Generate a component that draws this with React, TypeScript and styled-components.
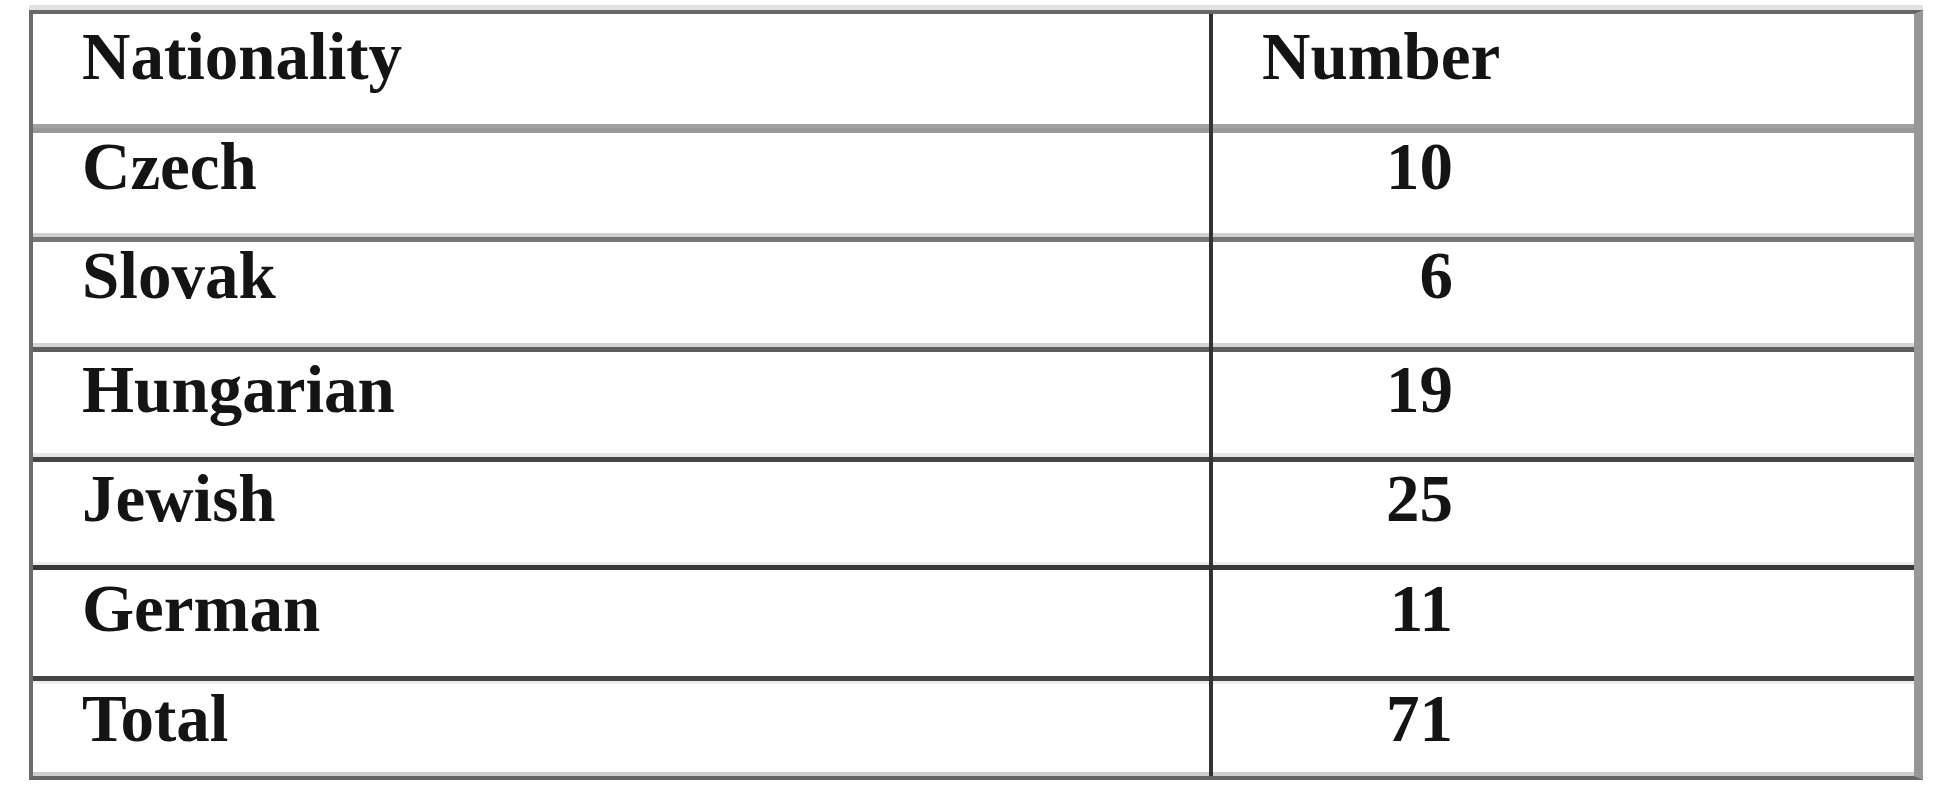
import React from "react";
import styled, { createGlobalStyle } from "styled-components";

const GlobalStyle = createGlobalStyle`
	html, body {
		margin: 0;
		padding: 0;
		background: #ffffff;
	}
	* {
		box-sizing: border-box;
	}
`;

const Page = styled.div`
	width: 1952px;
	height: 800px;
	padding: 10px 0 0 29px;
	background: #ffffff;
`;

const Table = styled.div`
	width: 1894px;
	border-top: 4px solid #666666;
	border-left: 4px solid #6a6a6a;
	border-right: 9px solid #979797;
	border-bottom: 4px solid #666666;
	box-shadow: 0 -5px 0 #e2e2e2;
	font-family: "Liberation Serif", "Times New Roman", serif;
	font-weight: 700;
	font-size: 67px;
	line-height: 1;
	color: #141414;
	display: flex;
	flex-direction: column;
`;

const Row = styled.div<{ $height: number; $pad: number }>`
	display: grid;
	grid-template-columns: 1180px 1fr;
	height: ${(p) => p.$height}px;
`;

const NameCell = styled.div<{ $pad: number }>`
	border-right: 4px solid #333333;
	padding: ${(p) => p.$pad}px 0 0 49px;
	white-space: nowrap;
`;

const ValueCell = styled.div<{ $pad: number }>`
	padding: ${(p) => p.$pad}px 0 0 49px;
	white-space: nowrap;
`;

const Value = styled.span`
	display: inline-block;
	width: 191px;
	text-align: right;
`;

const Rule = styled.div<{ $upper: string; $lower: string; $upperH: number; $lowerH: number }>`
	position: relative;
	border-top: ${(p) => p.$upperH}px solid ${(p) => p.$upper};
	border-bottom: ${(p) => p.$lowerH}px solid ${(p) => p.$lower};

	&::after {
		content: "";
		position: absolute;
		left: 1176px;
		top: -${(p) => p.$upperH}px;
		width: 4px;
		height: ${(p) => p.$upperH + p.$lowerH}px;
		background: #333333;
	}
`;

const BottomBand = styled.div`
	height: 4px;
	display: grid;
	grid-template-columns: 1180px 1fr;
	background: #cfcfcf;

	& > span:first-child {
		border-right: 4px solid #333333;
	}
`;

interface IRow {
	name: string;
	value: string;
	height: number;
	pad: number;
}

interface IRule {
	upper: string;
	lower: string;
	upperH: number;
	lowerH: number;
}

const rows: IRow[] = [
	{ name: "Czech", value: "10", height: 100, pad: 0 },
	{ name: "Slovak", value: "6", height: 101, pad: 0 },
	{ name: "Hungarian", value: "19", height: 101, pad: 4 },
	{ name: "Jewish", value: "25", height: 100, pad: 3 },
	{ name: "German", value: "11", height: 106, pad: 5 },
	{ name: "Total", value: "71", height: 88, pad: 1 },
];

// lines drawn above each body row
const rules: IRule[] = [
	{ upper: "#a2a2a2", lower: "#989898", upperH: 4, lowerH: 5 },
	{ upper: "#d0d0d0", lower: "#767676", upperH: 4, lowerH: 5 },
	{ upper: "#d4d4d4", lower: "#5e5e5e", upperH: 4, lowerH: 5 },
	{ upper: "#e6e6e6", lower: "#454545", upperH: 4, lowerH: 5 },
	{ upper: "#ededed", lower: "#383838", upperH: 3, lowerH: 5 },
	{ upper: "#444444", lower: "#eeeeee", upperH: 5, lowerH: 3 },
];

function App() {
	return (
		<>
			<GlobalStyle />
			<Page>
				<Table>
					<Row $height={110} $pad={9}>
						<NameCell $pad={9}>Nationality</NameCell>
						<ValueCell $pad={9}>Number</ValueCell>
					</Row>
					{rows.map((row, i) => (
						<React.Fragment key={row.name}>
							<Rule
								$upper={rules[i].upper}
								$lower={rules[i].lower}
								$upperH={rules[i].upperH}
								$lowerH={rules[i].lowerH}
							/>
							<Row $height={row.height} $pad={row.pad}>
								<NameCell $pad={row.pad}>{row.name}</NameCell>
								<ValueCell $pad={row.pad}>
									<Value>{row.value}</Value>
								</ValueCell>
							</Row>
						</React.Fragment>
					))}
					<BottomBand>
						<span />
						<span />
					</BottomBand>
				</Table>
			</Page>
		</>
	);
}

export default App;
